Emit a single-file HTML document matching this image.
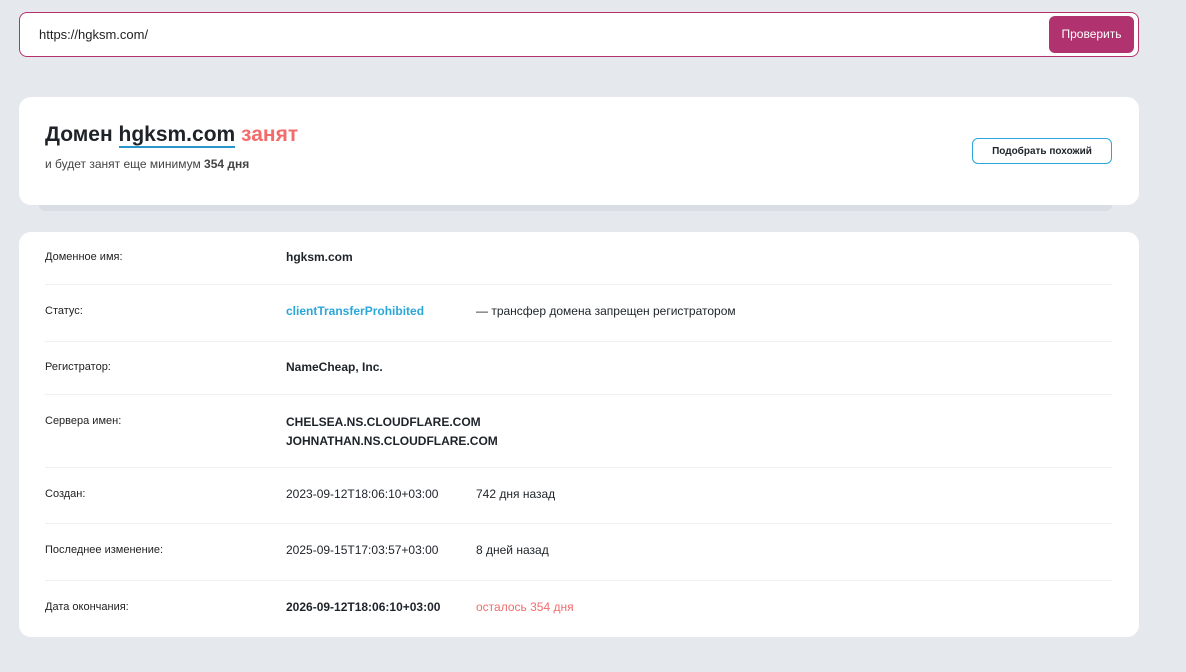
<!DOCTYPE html>
<html><head><meta charset="utf-8"><style>
body{margin:0;width:1186px;height:672px;background:#e5e9ed;font-family:"Liberation Sans",sans-serif;color:#1d2329;position:relative;overflow:hidden}
.search{position:absolute;left:19px;top:12px;width:1118px;height:43px;background:#fff;border:1px solid #b5326e;border-radius:8px}
.search .u{position:absolute;left:19px;top:14px;font-size:13px;color:#222}
.search .b{position:absolute;right:4px;top:3px;width:85px;height:37px;background:#b0326e;border-radius:6px;color:#fff;font-size:12px;text-align:center;line-height:37px}
.shadow{position:absolute;left:39px;top:195px;width:1073px;height:16px;background:#d9dee4;border-radius:0 0 6px 6px}
.card1{position:absolute;left:19px;top:97px;width:1120px;height:108px;background:#fff;border-radius:12px}
h1{position:absolute;left:26px;top:26px;margin:0;font-size:21px;font-weight:bold}
h1 u{text-decoration:none;border-bottom:2px solid #2a95c8}
h1 span{color:#f26c6c}
.sub{position:absolute;left:26px;top:60px;font-size:12px;color:#444}
.pb{position:absolute;left:953px;top:41px;width:138px;height:24px;border:1px solid #2aa7d8;border-radius:6px;font-size:10px;font-weight:bold;text-align:center;line-height:25px}
.card2{position:absolute;left:19px;top:232px;width:1120px;height:405px;background:#fff;border-radius:12px}
.row{position:absolute;left:26px;width:1067px;border-bottom:1px solid #eef0f2;font-size:12px}
.l{position:absolute;left:0;font-size:11px;color:#222}
.v{position:absolute;left:241px;font-size:12px}
.w{position:absolute;left:431px;font-size:12px}
b{font-weight:bold}
</style></head><body>
<div class="search"><div class="u">https://hgksm.com/</div><div class="b">Проверить</div></div>
<div class="shadow"></div>
<div class="card1"><h1>Домен <u>hgksm.com</u> <span>занят</span></h1>
<div class="sub">и будет занят еще минимум <b>354 дня</b></div>
<div class="pb">Подобрать похожий</div></div>
<div class="card2">
<div class="row" style="top:0;height:52px"><div class="l" style="top:19px">Доменное имя:</div><div class="v" style="top:18px"><b>hgksm.com</b></div></div>
<div class="row" style="top:53px;height:56px"><div class="l" style="top:20px">Статус:</div><div class="v" style="top:19px;color:#2aa7d8"><b>clientTransferProhibited</b></div><div class="w" style="top:19px">— трансфер домена запрещен регистратором</div></div>
<div class="row" style="top:110px;height:52px"><div class="l" style="top:19px">Регистратор:</div><div class="v" style="top:18px"><b>NameCheap, Inc.</b></div></div>
<div class="row" style="top:163px;height:72px"><div class="l" style="top:20px">Сервера имен:</div><div class="v" style="top:18px;line-height:19px"><b>CHELSEA.NS.CLOUDFLARE.COM<br>JOHNATHAN.NS.CLOUDFLARE.COM</b></div></div>
<div class="row" style="top:236px;height:55px"><div class="l" style="top:20px">Создан:</div><div class="v" style="top:19px">2023-09-12T18:06:10+03:00</div><div class="w" style="top:19px">742 дня назад</div></div>
<div class="row" style="top:292px;height:56px"><div class="l" style="top:20px">Последнее изменение:</div><div class="v" style="top:19px">2025-09-15T17:03:57+03:00</div><div class="w" style="top:19px">8 дней назад</div></div>
<div class="row" style="top:349px;height:50px;border:0"><div class="l" style="top:20px">Дата окончания:</div><div class="v" style="top:19px"><b>2026-09-12T18:06:10+03:00</b></div><div class="w" style="top:19px;color:#f26c6c">осталось 354 дня</div></div>
</div>
</body></html>
